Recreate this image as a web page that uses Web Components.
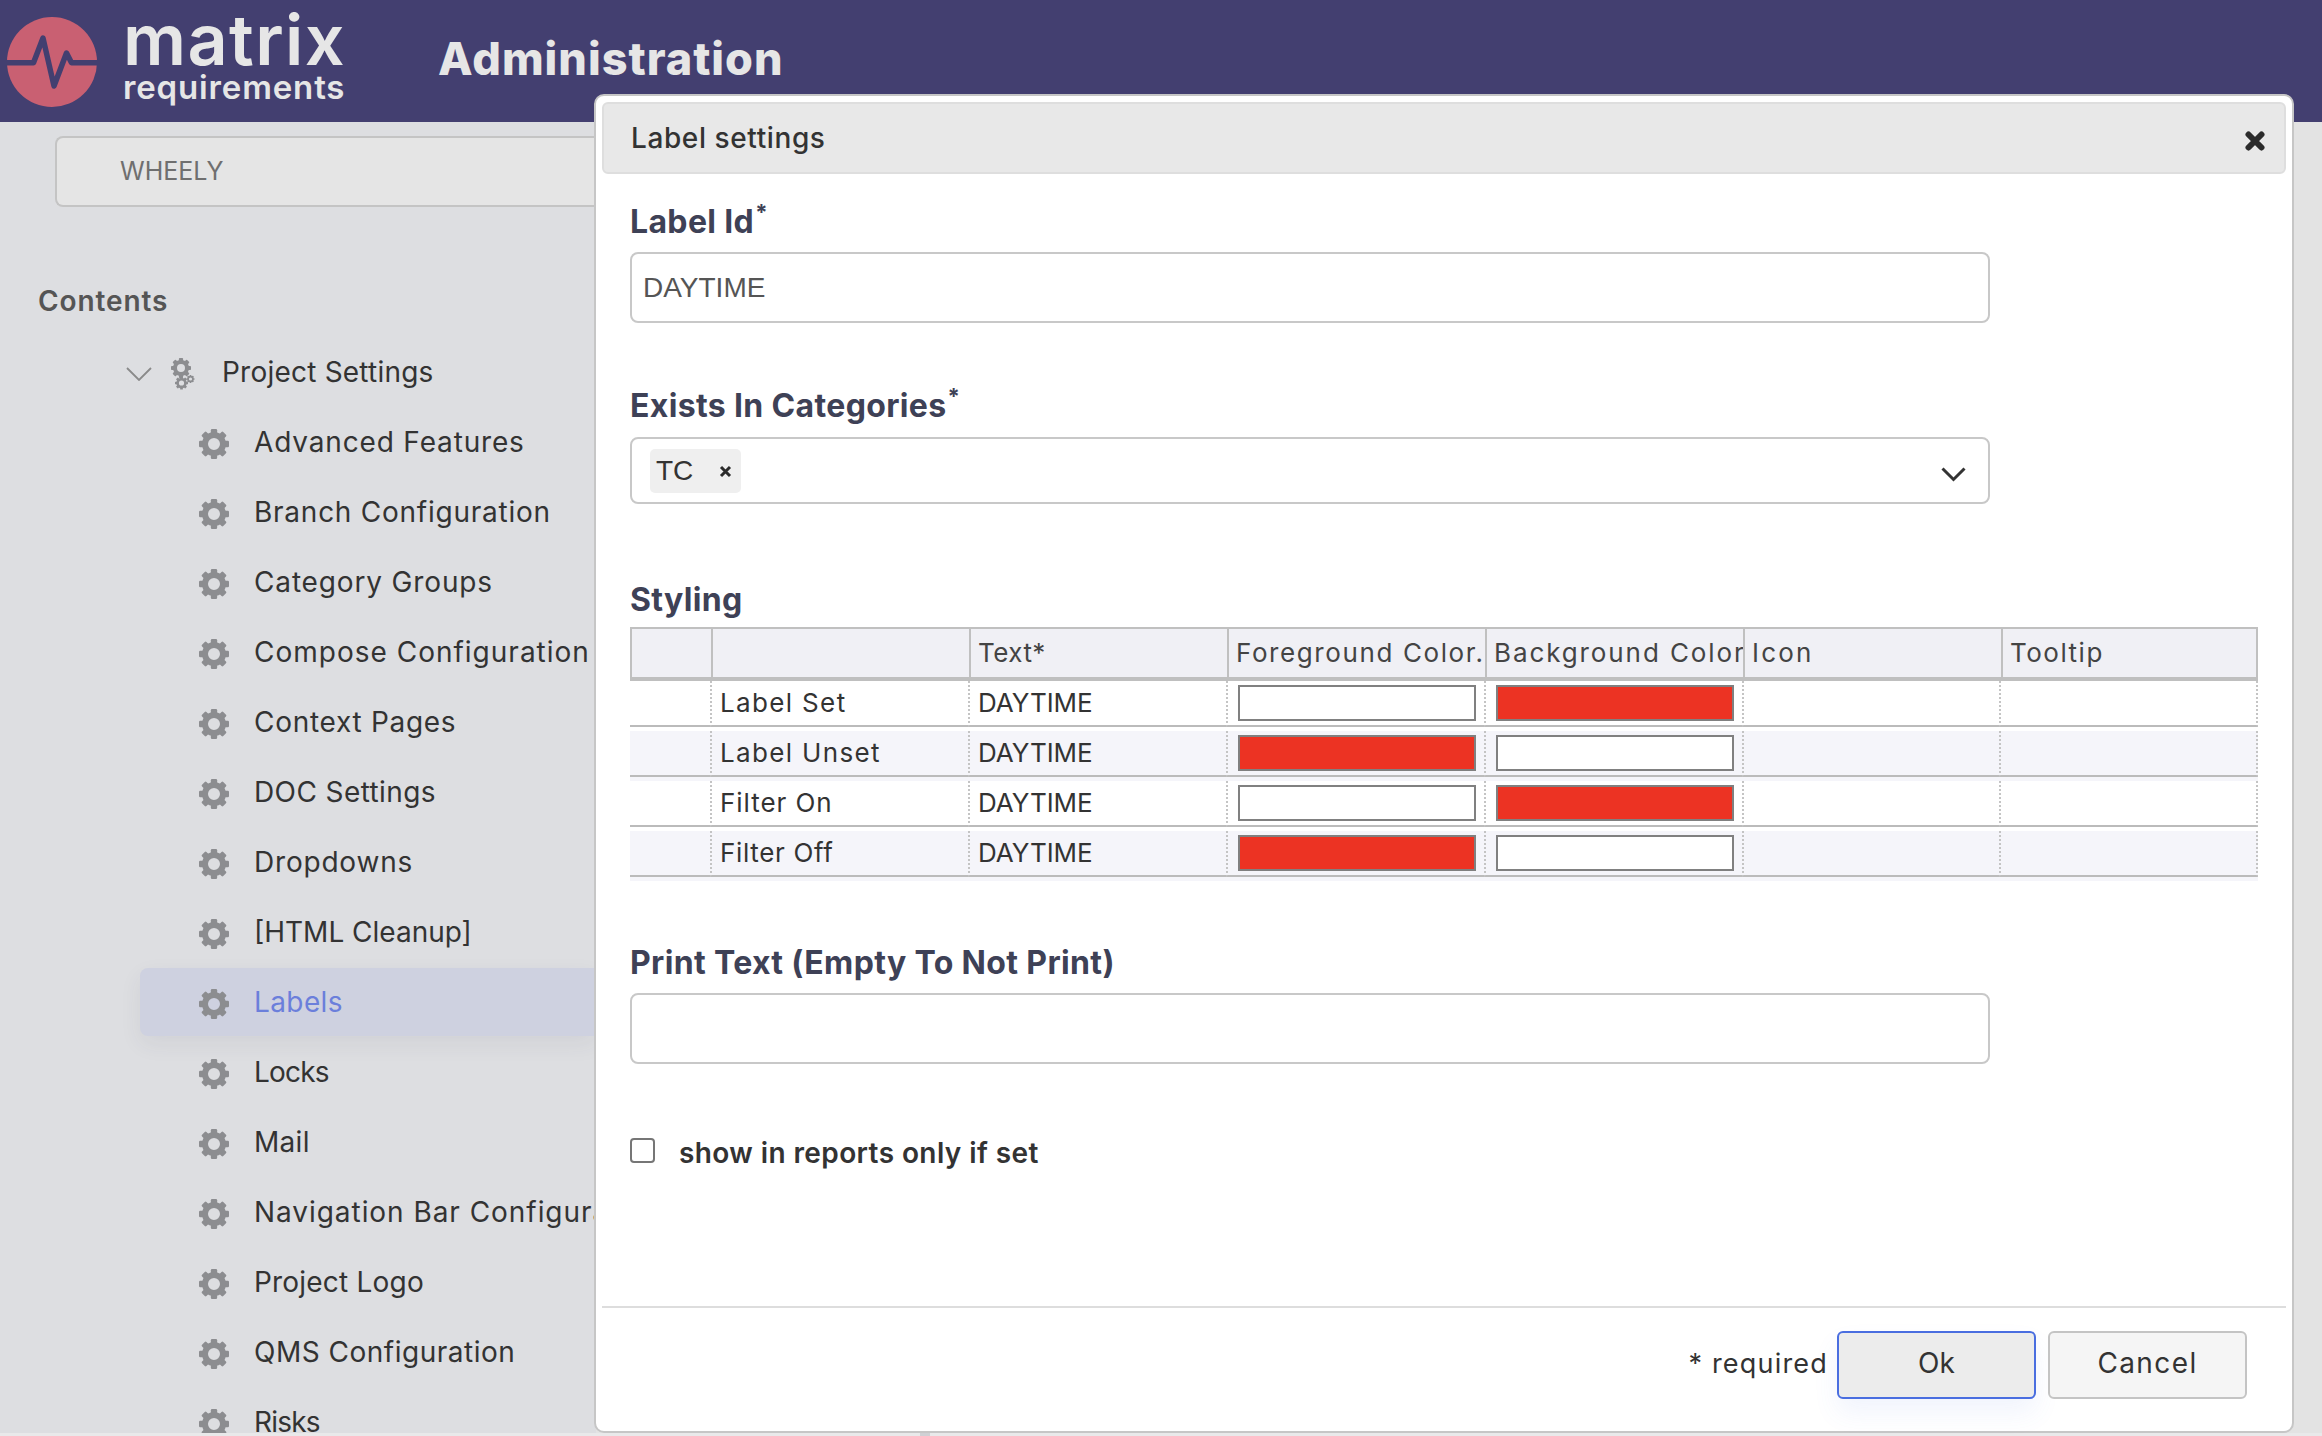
<!DOCTYPE html>
<html>
<head>
<meta charset="utf-8">
<title>Administration</title>
<style>
  html, body { margin: 0; padding: 0; }
  body { width: 2322px; height: 1436px; overflow: hidden; font-family: Inter, "Liberation Sans", sans-serif; color: #333; }
</style>
</head>
<body>
<app-shell>
  <app-header slot="header" title-text="Administration"></app-header>
  <side-nav slot="nav" project="WHEELY">
    <nav-item kind="root" style="--ls:.22px">Project Settings</nav-item>
    <nav-item style="--ls:.84px">Advanced Features</nav-item>
    <nav-item style="--ls:.75px">Branch Configuration</nav-item>
    <nav-item style="--ls:.85px">Category Groups</nav-item>
    <nav-item style="--ls:1px">Compose Configuration</nav-item>
    <nav-item style="--ls:.71px">Context Pages</nav-item>
    <nav-item style="--ls:.4px">DOC Settings</nav-item>
    <nav-item style="--ls:.8px">Dropdowns</nav-item>
    <nav-item style="--ls:0">[HTML Cleanup]</nav-item>
    <nav-item active style="--ls:.4px">Labels</nav-item>
    <nav-item style="--ls:-.8px">Locks</nav-item>
    <nav-item style="--ls:.3px">Mail</nav-item>
    <nav-item style="--ls:.95px">Navigation Bar Configuration</nav-item>
    <nav-item style="--ls:.2px">Project Logo</nav-item>
    <nav-item style="--ls:.5px">QMS Configuration</nav-item>
    <nav-item style="--ls:-.8px">Risks</nav-item>
  </side-nav>
  <modal-dialog slot="dialog" heading="Label settings">
    <form-field heading="Label Id" required style="margin-top:25px">
      <text-box>DAYTIME</text-box>
    </form-field>
    <form-field heading="Exists In Categories" required style="margin-top:60px;--gap:10px">
      <tag-select tag="TC"></tag-select>
    </form-field>
    <form-field heading="Styling" style="margin-top:73px;--gap:6px">
      <style-table></style-table>
    </form-field>
    <form-field heading="Print Text (Empty To Not Print)" style="margin-top:59px">
      <text-box></text-box>
    </form-field>
    <check-row style="margin-top:72px">show in reports only if set</check-row>
    <dialog-footer slot="footer"></dialog-footer>
  </modal-dialog>
</app-shell>

<script>
// builds one gear as svg shapes, used by the nav icons
function gear(cx, cy, R) {
  let teeth = '';
  for (let i = 0; i < 8; i++) {
    teeth += `<rect x="${cx - R * 0.21}" y="${cy - R}" width="${R * 0.42}" height="${R * 0.4}" rx="${R * 0.08}" transform="rotate(${i * 45} ${cx} ${cy})"/>`;
  }
  return `${teeth}<circle cx="${cx}" cy="${cy}" r="${R * 0.6}" fill="none" stroke="#8c8d90" stroke-width="${R * 0.4}"/>`;
}

class AppShell extends HTMLElement {
  constructor() {
    super();
    this.attachShadow({ mode: 'open' });
    this.shadowRoot.innerHTML = `
      <style>
        :host { display: grid; grid-template-rows: 122px 1fr 3px; width: 2322px; height: 1436px; position: relative; overflow: hidden; }
        main { display: grid; grid-template-columns: 596px 1fr; min-height: 0; background: #e3e3e3; }
        .strip { background: #e9e9ea; position: relative; }
        .tick { position: absolute; left: 920px; top: 0; width: 10px; height: 3px; background: #cfd0d4; }
        .over { position: absolute; left: 594px; top: 94px; }
      </style>
      <slot name="header"></slot>
      <main><slot name="nav"></slot><div></div></main>
      <div class="strip"><div class="tick"></div></div>
      <div class="over"><slot name="dialog"></slot></div>
    `;
  }
}

class AppHeader extends HTMLElement {
  constructor() {
    super();
    this.attachShadow({ mode: 'open' });
    this.shadowRoot.innerHTML = `
      <style>
        :host { display: flex; background: #433f70; color: #e6e6e6; height: 122px; padding-left: 7px; box-sizing: border-box; }
        svg { width: 90px; height: 92px; margin-top: 16px; flex: none; }
        .brand { margin-left: 26px; width: 315px; padding-top: 15px; }
        .matrix { font-size: 70px; line-height: 50px; font-weight: 600; letter-spacing: 1.4px; }
        .req { font-size: 33px; line-height: 30px; margin-top: 7px; font-weight: 600; letter-spacing: 0.85px; }
        h1 { margin: 0; align-self: center; padding-bottom: 5px; font-size: 45px; font-weight: 800; letter-spacing: 1px; line-height: 60px; }
      </style>
      <svg viewBox="0 0 90 92">
        <circle cx="45" cy="46" r="45" fill="#c96072"/>
        <path d="M-1 46.7H26.5L36 22L47 70L59.5 37L64.5 46.7H91" fill="none" stroke="#433f70" stroke-width="5.5" stroke-linejoin="round"/>
      </svg>
      <div class="brand"><div class="matrix">matrix</div><div class="req">requirements</div></div>
      <h1></h1>
    `;
    this.shadowRoot.querySelector('h1').textContent = this.getAttribute('title-text');
  }
}

class SideNav extends HTMLElement {
  constructor() {
    super();
    this.attachShadow({ mode: 'open' });
    this.shadowRoot.innerHTML = `
      <style>
        :host { display: block; background: #dddee1; overflow: hidden; min-width: 0; }
        .project { margin: 14px 0 0 55px; height: 71px; box-sizing: border-box; border: 2px solid #c4c4c4; border-right: 0; border-radius: 8px 0 0 8px; background: #e5e5e5; color: #6f6f6f; font-size: 25px; line-height: 67px; padding-left: 63px; letter-spacing: 0; }
        h2 { margin: 74px 0 0 38px; font-size: 28px; line-height: 40px; font-weight: 600; color: #555; letter-spacing: 0.9px; }
        .list { margin: 18px 0 0 0; }
      </style>
      <div class="project"></div>
      <h2>Contents</h2>
      <div class="list"><slot></slot></div>
    `;
    this.shadowRoot.querySelector('.project').textContent = this.getAttribute('project');
  }
}

class NavItem extends HTMLElement {
  constructor() {
    super();
    this.attachShadow({ mode: 'open' });
    const root = this.getAttribute('kind') === 'root';
    const icon = root
      ? `<svg class="chev" viewBox="0 0 26 14" width="26" height="14"><path d="M1 1L13 13L25 1" fill="none" stroke="#8a8a8a" stroke-width="1.8"/></svg>
         <svg class="gears" viewBox="0 0 24 32" width="24" height="32" fill="#8c8d90">${gear(10, 10, 10)}${gear(10.5, 25, 6.5)}${gear(19.5, 21, 4)}</svg>`
      : `<svg class="gear" viewBox="0 0 30 30" width="30" height="30" fill="#8c8d90">${gear(15, 15, 15)}</svg>`;
    this.shadowRoot.innerHTML = `
      <style>
        :host { display: block; height: 70px; margin-left: 140px; }
        .row { height: 70px; display: flex; align-items: center; position: relative; white-space: nowrap; font-size: 28px; color: #333; letter-spacing: var(--ls, .5px); }
        :host([active]) .row { color: #6b7fdb; }
        :host([active]) .row::before { content: ''; position: absolute; left: 0; right: 0; top: -1px; height: 68px; background: #ced1e0; border-radius: 8px 0 0 8px; box-shadow: 0 8px 22px rgba(60,60,90,.07); }
        svg, span { position: relative; }
        svg { flex: none; }
        .gear { margin-left: 59px; }
        .chev { margin-left: -14px; }
        .gears { margin-left: 19px; }
        span { padding-bottom: 4px; margin-left: 25px; }
        .gears + span { margin-left: 27px; }
      </style>
      <div class="row">${icon}<span><slot></slot></span></div>
    `;
  }
}

class ModalDialog extends HTMLElement {
  constructor() {
    super();
    this.attachShadow({ mode: 'open' });
    this.shadowRoot.innerHTML = `
      <style>
        :host { display: flex; flex-direction: column; width: 1700px; height: 1339px; box-sizing: border-box; background: #fff; border: 2px solid #c6c6c6; border-radius: 10px; padding: 6px 6px 0; }
        .bar { height: 72px; box-sizing: border-box; flex: none; display: flex; align-items: center; justify-content: space-between; background: #e8e8e8; border: 2px solid #dedede; border-radius: 6px; padding: 0 19px 0 27px; }
        .bar span { font-size: 28px; font-weight: 500; color: #333; letter-spacing: 0.6px; }
        .bar svg { margin-top: 6px; }
        .body { flex: 1; padding-left: 28px; padding-right: 28px; min-height: 0; }
      </style>
      <div class="bar"><span></span>
        <svg width="20" height="20" viewBox="0 0 20 20"><path d="M3.5 3.5L16.5 16.5M16.5 3.5L3.5 16.5" stroke="#2b2b2b" stroke-width="6" stroke-linecap="round"/></svg>
      </div>
      <div class="body"><slot></slot></div>
      <slot name="footer"></slot>
    `;
    this.shadowRoot.querySelector('.bar span').textContent = this.getAttribute('heading');
  }
}

class FormField extends HTMLElement {
  constructor() {
    super();
    this.attachShadow({ mode: 'open' });
    const star = this.hasAttribute('required') ? '<sup>*</sup>' : '';
    this.shadowRoot.innerHTML = `
      <style>
        :host { display: block; }
        h3 { margin: 0 0 var(--gap, 9px); height: 44px; font-size: 32px; line-height: 46px; font-weight: 700; color: #3e4156; white-space: nowrap; letter-spacing: 0.35px; }
        sup { font-size: 22px; line-height: 0; vertical-align: 13px; margin-left: 1px; letter-spacing: 0; }
      </style>
      <h3><span></span>${star}</h3>
      <slot></slot>
    `;
    this.shadowRoot.querySelector('span').textContent = this.getAttribute('heading');
  }
}

class TextBox extends HTMLElement {
  constructor() {
    super();
    this.attachShadow({ mode: 'open' });
    this.shadowRoot.innerHTML = `
      <style>
        :host { display: block; width: 1360px; height: 71px; box-sizing: border-box; border: 2px solid #c8c8c8; border-radius: 8px; background: #fff; font-family: "Liberation Sans", Arial, sans-serif; font-size: 28px; line-height: 67px; color: #555; padding-left: 11px; }
      </style>
      <slot></slot>
    `;
  }
}

class TagSelect extends HTMLElement {
  constructor() {
    super();
    this.attachShadow({ mode: 'open' });
    this.shadowRoot.innerHTML = `
      <style>
        :host { display: flex; align-items: center; justify-content: space-between; width: 1360px; height: 67px; box-sizing: border-box; border: 2px solid #c8c8c8; border-radius: 8px; background: #fff; padding: 0 22px 0 18px; }
        .chip { display: flex; align-items: center; width: 91px; height: 44px; box-sizing: border-box; background: #efefef; border-radius: 5px; padding-left: 6px; font-family: "Liberation Sans", Arial, sans-serif; font-size: 28px; color: #333; }
        .chip svg { margin-left: 26px; margin-top: 2px; }
        .arrow { margin-top: 8px; }
      </style>
      <div class="chip"><span></span>
        <svg width="13" height="13" viewBox="0 0 13 13"><path d="M2 2L11 11M11 2L2 11" stroke="#2b2b2b" stroke-width="3"/></svg>
      </div>
      <svg class="arrow" width="25" height="15" viewBox="0 0 25 15"><path d="M1.5 1.5L12.5 12.5L23.5 1.5" fill="none" stroke="#333" stroke-width="3"/></svg>
    `;
    this.shadowRoot.querySelector('span').textContent = this.getAttribute('tag');
  }
}

class ColorSwatch extends HTMLElement {
  constructor() {
    super();
    this.attachShadow({ mode: 'open' });
    this.shadowRoot.innerHTML = `
      <style>
        :host { display: block; width: 238px; height: 36px; box-sizing: border-box; border: 2px solid #808080; background: #fff; margin-left: 10px; }
        :host([red]) { background: #ec3323; }
      </style>
    `;
  }
}

class StyleTable extends HTMLElement {
  constructor() {
    super();
    this.attachShadow({ mode: 'open' });
    // text, letter spacing per column title
    const heads = [['', 0], ['', 0], ['Text*', .45], ['Foreground Color.', 1.6], ['Background Color', 1.9], ['Icon', 2.2], ['Tooltip', 1.5]];
    const rows = [['Label Set', false, 1.35], ['Label Unset', true, 1.35], ['Filter On', false, .95], ['Filter Off', true, .65]];
    const swatch = on => `<color-swatch ${on ? 'red' : ''}></color-swatch>`;
    this.shadowRoot.innerHTML = `
      <style>
        :host { display: block; width: 1628px; font-size: 26px; color: #333; }
        .head, .row { display: grid; }
        .head { grid-template-columns: 81px repeat(5, 258px) 257px; height: 54px; box-sizing: border-box; background: #f0f0f5; border-top: 2px solid #c0c0c0; border-bottom: 4px solid #bfbfbf; border-right: 2px solid #c0c0c0; color: #444; }
        .head div { border-left: 2px solid #c0c0c0; padding: 0 0 0 7px; line-height: 48px; overflow: hidden; white-space: nowrap; }
        .row { grid-template-columns: 80px repeat(4, 258px) 257px 259px; height: 50px; background: #fff; }
        .row:nth-child(even) { background: #f5f5fa; }
        .row div { height: 46px; box-sizing: border-box; border-bottom: 2px solid #bbb; border-left: 2px dotted #c4c4c4; display: flex; align-items: center; white-space: nowrap; }
        .row div:first-child { border-left: 0; }
        .row div:last-child { border-right: 2px dotted #c4c4c4; }
        .row span { padding: 0 0 1px 8px; }
        .day { letter-spacing: -0.05px; }
      </style>
      <div class="head">${heads.map(([h, ls]) => `<div style="letter-spacing:${ls}px">${h}</div>`).join('')}</div>
      ${rows.map(([name, fgRed, ls]) => `
        <div class="row">
          <div></div>
          <div><span style="letter-spacing:${ls}px">${name}</span></div>
          <div><span class="day">DAYTIME</span></div>
          <div>${swatch(fgRed)}</div>
          <div>${swatch(!fgRed)}</div>
          <div></div>
          <div></div>
        </div>`).join('')}
    `;
  }
}

class CheckRow extends HTMLElement {
  constructor() {
    super();
    this.attachShadow({ mode: 'open' });
    this.shadowRoot.innerHTML = `
      <style>
        :host { display: flex; align-items: center; height: 28px; font-size: 28px; font-weight: 600; color: #333; letter-spacing: 0.4px; }
        i { display: block; width: 25px; height: 25px; box-sizing: border-box; border: 2px solid #767676; border-radius: 4px; background: #fff; margin-right: 24px; }
        span { padding-top: 5px; }
      </style>
      <i></i><span><slot></slot></span>
    `;
  }
}

class DialogFooter extends HTMLElement {
  constructor() {
    super();
    this.attachShadow({ mode: 'open' });
    this.shadowRoot.innerHTML = `
      <style>
        :host { display: flex; align-items: center; justify-content: flex-end; flex: none; height: 125px; box-sizing: border-box; border-top: 2px solid #ddd; padding: 0 39px 10px 0; font-size: 27px; color: #333; }
        span { margin-right: 9px; padding-bottom: 3px; letter-spacing: 1.2px; }
        button { width: 199px; height: 68px; box-sizing: border-box; font: inherit; font-size: 28px; color: #333; border-radius: 6px; margin: 0; padding: 0 0 3px; }
        .ok { background: #ececec; border: 2px solid #4a6ee0; box-shadow: 0 14px 26px rgba(74,110,224,.08); }
        .cancel { background: #f5f5f5; border: 2px solid #c4c4c4; margin-left: 12px; letter-spacing: 1.4px; }
      </style>
      <span>* required</span>
      <button class="ok">Ok</button>
      <button class="cancel">Cancel</button>
    `;
  }
}

customElements.define('color-swatch', ColorSwatch);
customElements.define('nav-item', NavItem);
customElements.define('side-nav', SideNav);
customElements.define('app-header', AppHeader);
customElements.define('form-field', FormField);
customElements.define('text-box', TextBox);
customElements.define('tag-select', TagSelect);
customElements.define('style-table', StyleTable);
customElements.define('check-row', CheckRow);
customElements.define('dialog-footer', DialogFooter);
customElements.define('modal-dialog', ModalDialog);
customElements.define('app-shell', AppShell);
</script>
</body>
</html>
